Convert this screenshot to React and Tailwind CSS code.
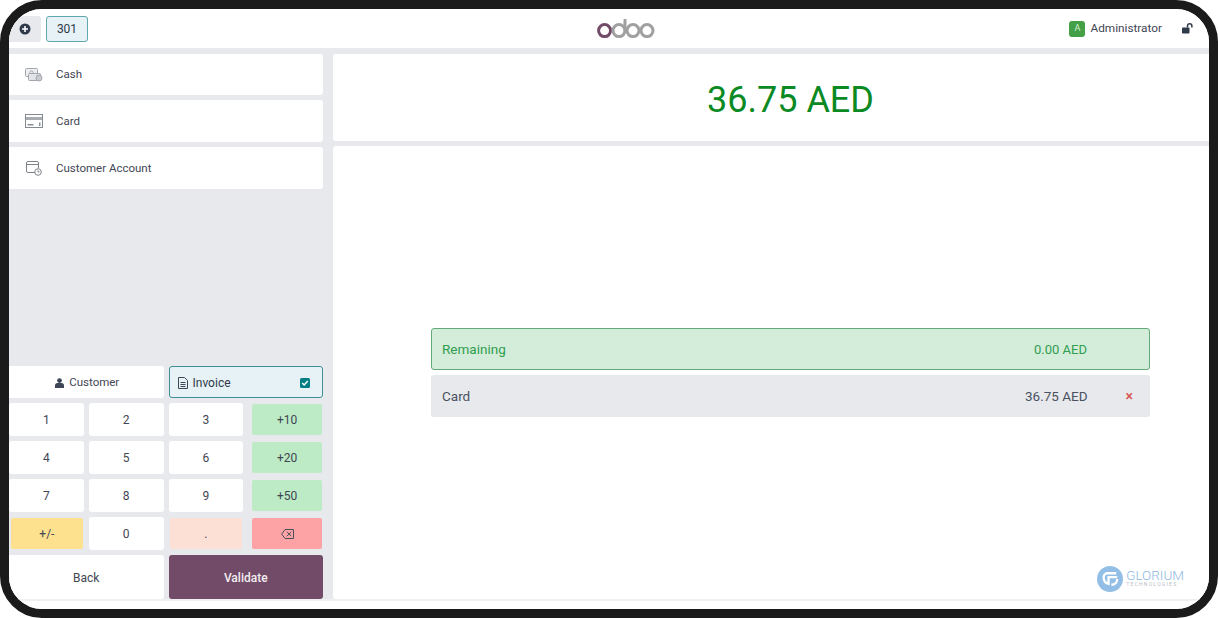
import React from 'react';

function CashIcon() {
  return (
    <svg width="18" height="14" viewBox="0 0 18 14" fill="none" stroke="#a3a6ac" strokeWidth="1">
      <rect x="0.5" y="0.5" width="12" height="8" rx="1" fill="#eceef0" />
      <circle cx="6.5" cy="4.5" r="1.6" />
      <rect x="3.5" y="5.5" width="12" height="7" rx="1" fill="#e2e4e7" />
      <circle cx="14" cy="10" r="3" fill="#c9ccd1" />
    </svg>
  );
}

function CardIcon() {
  return (
    <svg width="18" height="14" viewBox="0 0 18 14" fill="none">
      <rect x="0.5" y="0.5" width="17" height="13" fill="#fff" stroke="#858990" />
      <rect x="1" y="3" width="16" height="3" fill="#a9acb1" />
      <rect x="2.5" y="10" width="6" height="1.5" fill="#8b8f95" />
      <rect x="14" y="8.5" width="1.5" height="3.5" fill="#8b8f95" />
    </svg>
  );
}

function AccountIcon() {
  return (
    <svg width="16" height="15" viewBox="0 0 16 15" fill="none" stroke="#7d8188" strokeWidth="1">
      <path d="M9 11.5H2a1.5 1.5 0 0 1-1.5-1.5V2A1.5 1.5 0 0 1 2 .5h9A1.5 1.5 0 0 1 12.5 2v5" />
      <path d="M.5 3.5h12" />
      <circle cx="12" cy="11" r="3.3" fill="#fff" />
      <path d="M12 9.3V11h1.5" />
    </svg>
  );
}

function PayMethod({ icon, label, className = 'h-[42px]' }) {
  return (
    <div className={`flex items-center bg-white rounded-r-[3px] ${className}`}>
      <div className="flex w-[47px] justify-center pl-[3px]">{icon}</div>
      <span className="pt-px text-[11.5px] text-[#3f4654]">{label}</span>
    </div>
  );
}

function Key({ children, className = 'bg-white rounded-[3px]' }) {
  return (
    <div className={`flex items-center justify-center text-[12px] text-[#3f4654] ${className}`}>
      {children}
    </div>
  );
}

function OdooLogo() {
  return (
    <svg width="58" height="20" viewBox="0 0 58 20" fill="none" strokeWidth="3">
      <circle cx="7.6" cy="11.6" r="6" stroke="#714b67" />
      <circle cx="22" cy="11.6" r="6" stroke="#a0a0a0" />
      <path d="M28 11.6V1" stroke="#a0a0a0" strokeLinecap="round" />
      <circle cx="36" cy="11.6" r="6" stroke="#a0a0a0" />
      <circle cx="50" cy="11.6" r="6" stroke="#a0a0a0" />
    </svg>
  );
}

function GloriumLogo() {
  return (
    <div className="flex items-center gap-[3px]" style={{ fontFamily: 'Roboto, sans-serif' }}>
      <svg width="26" height="26" viewBox="0 0 27 27" fill="none">
        <circle cx="13.5" cy="13.5" r="13.5" fill="#93bfe6" />
        <path d="M20 7.5H10a5 5 0 0 0-3 5.5c.4 3 2.4 5 5 5.5v-7h9" stroke="#fff" strokeWidth="2.4" />
        <path d="M21 13.5c0 3.5-2.5 6-6 6" stroke="#fff" strokeWidth="2.4" />
      </svg>
      <div className="flex flex-col items-start">
        <span className="block text-[13.5px] leading-[11px] font-light text-[#8fb9df]">GLORIUM</span>
        <span className="block text-[5px] leading-[7px] tracking-[1.25px] text-[#b9bec4]">TECHNOLOGIES</span>
      </div>
    </div>
  );
}

export default function App() {
  return (
    <div className="w-[1218px] h-[618px] bg-white" style={{ fontFamily: 'Roboto, "Noto Sans", sans-serif' }}>
      <div className="flex h-full flex-col overflow-hidden rounded-[42px] border-[9px] border-[#1b1b1b] bg-white">
        {/* top bar */}
        <header className="flex h-[39px] shrink-0 items-center bg-white">
          <div className="flex items-center gap-[5px]">
            <div className="flex h-[26px] w-[32px] items-center justify-center rounded-r-[3px] bg-[#e7e9ed]">
              <svg width="12" height="12" viewBox="0 0 12 12">
                <circle cx="6" cy="6" r="5.5" fill="#2f3a4a" />
                <path d="M6 3v6M3 6h6" stroke="#fff" strokeWidth="1.6" />
              </svg>
            </div>
            <div className="flex h-[26px] w-[42px] items-center justify-center rounded-[3px] border border-[#5fa8ad] bg-[#e6f2f5] pt-px text-[12px] text-[#2f3a4a]">
              301
            </div>
          </div>
          <div className="ml-[509px]">
            <OdooLogo />
          </div>
          <div className="ml-auto flex items-center">
            <div className="flex h-[16px] w-[16px] items-center justify-center rounded-[3px] bg-[#43a047] text-[9px] text-[#d8f0d8]">
              A
            </div>
            <span className="ml-[5px] pt-px text-[11.8px] text-[#3f4654]">Administrator</span>
            <svg className="ml-[20px] mr-[15px]" width="12" height="11" viewBox="0 0 12 11" fill="none">
              <rect x="0" y="4.5" width="7.5" height="6" rx="0.8" fill="#2f3a4a" />
              <path d="M5.5 4.5V3a2.2 2.2 0 0 1 4.4 0v1.5" stroke="#2f3a4a" strokeWidth="1.5" />
            </svg>
          </div>
        </header>

        {/* screen body */}
        <div className="flex flex-1 gap-[10px] bg-[#e7e9ed] pt-[6px]">
          <aside className="flex h-[545px] w-[314px] shrink-0 flex-col">
            <div className="flex flex-col gap-[5px]">
              <PayMethod className="h-[41px]" icon={<CashIcon />} label="Cash" />
              <PayMethod icon={<CardIcon />} label="Card" />
              <PayMethod icon={<AccountIcon />} label="Customer Account" />
            </div>

            <div className="mt-auto flex flex-col gap-[5px]">
              <div className="grid grid-cols-2 gap-[5px]">
                <div className="flex h-[32px] items-center justify-center gap-[5px] rounded-r-[3px] bg-white pt-px pl-[2px] text-[11.5px] text-[#3f4654]">
                  <svg width="9" height="10" viewBox="0 0 9 10" fill="#3d4656">
                    <circle cx="4.5" cy="2.6" r="2.4" />
                    <path d="M0 10V7.5A2.5 2.5 0 0 1 2.5 5h4A2.5 2.5 0 0 1 9 7.5V10z" />
                  </svg>
                  Customer
                </div>
                <div className="flex h-[32px] items-center rounded-[3px] border border-[#3f8f98] bg-[#e6f2f5] pl-[8px] pr-[12px] pt-px text-[12px] text-[#2f3a4a]">
                  <svg width="10" height="12" viewBox="0 0 10 12" fill="none" stroke="#3d4656">
                    <path d="M.5.5h6l3 3v8H.5z" />
                    <path d="M2.5 5.5h5M2.5 7.5h5M2.5 9.5h5" />
                  </svg>
                  <span className="ml-[5px]">Invoice</span>
                  <svg className="ml-auto" width="10" height="10" viewBox="0 0 10 10">
                    <rect width="10" height="10" rx="1.5" fill="#017e84" />
                    <path d="M2.2 5l2 2 3.6-4" stroke="#fff" strokeWidth="1.5" fill="none" />
                  </svg>
                </div>
              </div>

              <div className="grid h-[147px] grid-cols-4 grid-rows-4 gap-[5px] [&>div]:h-[33px]">
                <Key>1</Key>
                <Key>2</Key>
                <Key>3</Key>
                <Key className="ml-[4px] mr-px !h-[31px] self-center rounded-[2px] bg-[#bdebc5]">+10</Key>
                <Key>4</Key>
                <Key>5</Key>
                <Key>6</Key>
                <Key className="ml-[4px] mr-px !h-[31px] self-center rounded-[2px] bg-[#bdebc5]">+20</Key>
                <Key>7</Key>
                <Key>8</Key>
                <Key>9</Key>
                <Key className="ml-[4px] mr-px !h-[31px] self-center rounded-[2px] bg-[#bdebc5]">+50</Key>
                <Key className="ml-[2px] mr-px !h-[31px] self-center rounded-[2px] bg-[#fde18f]">+/-</Key>
                <Key>0</Key>
                <Key className="mx-px !h-[31px] self-center rounded-[2px] bg-[#fcdfd5]">.</Key>
                <Key className="ml-[4px] mr-px !h-[31px] self-center rounded-[2px] bg-[#fea3a5]">
                  <svg width="13" height="10" viewBox="0 0 13 10" fill="none" stroke="#4a4f58">
                    <path d="M4 .5h8.5v9H4L.7 5z" />
                    <path d="M6 2.8l4.2 4.4M10.2 2.8L6 7.2" />
                  </svg>
                </Key>
              </div>

              <div className="grid grid-cols-2 gap-[5px]">
                <div className="flex h-[44px] items-center justify-center rounded-r-[3px] bg-white pt-px text-[12px] text-[#3f4654]">
                  Back
                </div>
                <div className="flex h-[44px] items-center justify-center rounded-[3px] bg-[#714b67] pt-px text-[12px] font-medium text-[#f3edf1]">
                  Validate
                </div>
              </div>
            </div>
          </aside>

          <main className="flex h-[545px] flex-1 flex-col gap-[5px]">
            <div className="flex h-[87px] items-center justify-center rounded-l-[3px] bg-white pl-[39px] pt-[4px]">
              <span className="text-[36px] text-[#0b8a24]">36.75 AED</span>
            </div>
            <div className="relative flex flex-1 flex-col justify-center gap-[5px] rounded-l-[3px] bg-white pl-[98px] pr-[59px]">
              <div className="flex h-[42px] items-center justify-between rounded-[3px] border border-[#62ab79] bg-[#d4ecda] pl-[10px] pr-[62px] pt-px text-[13.5px] text-[#2f9e4f]">
                <span>Remaining</span>
                <span className="text-[13px]">0.00 AED</span>
              </div>
              <div className="flex h-[42px] items-center rounded-[3px] bg-[#e7e9ed] pl-[11px] pr-[17px] pt-px text-[13.5px] text-[#4a5160]">
                <span>Card</span>
                <span className="ml-auto mr-px">36.75 AED</span>
                <span className="ml-[37px] text-[14px] font-semibold text-[#d9534f]">×</span>
              </div>
              <div className="absolute bottom-[7px] right-[25px]">
                <GloriumLogo />
              </div>
            </div>
          </main>
        </div>
        <div className="h-[10px] shrink-0 border-t-2 border-[#eef0f2] bg-white" />
      </div>
    </div>
  );
}
